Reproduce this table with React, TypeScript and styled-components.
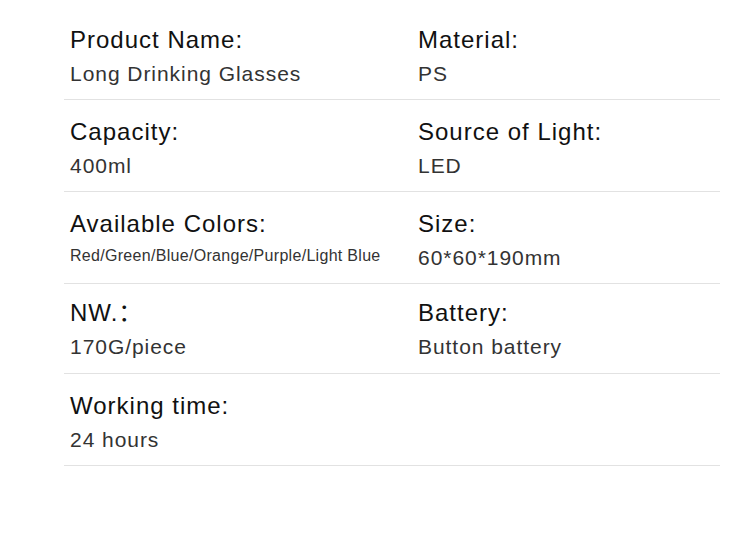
import {createGlobalStyle, styled} from "styled-components"

type Spec = {label: string, value: string, small?: boolean}

const rows: {cells: Spec[], tight?: boolean}[] = [
  {cells: [{label: "Product Name:", value: "Long Drinking Glasses"}, {label: "Material:", value: "PS"}]},
  {cells: [{label: "Capacity:", value: "400ml"}, {label: "Source of Light:", value: "LED"}]},
  {cells: [{label: "Available Colors:", value: "Red/Green/Blue/Orange/Purple/Light Blue", small: true}, {label: "Size:", value: "60*60*190mm"}]},
  {cells: [{label: "NW.：", value: "170G/piece"}, {label: "Battery:", value: "Button battery"}], tight: true},
  {cells: [{label: "Working time:", value: "24 hours"}]},
]

const App = () => {
  return (
    <Page>
      <GlobalStyle />
      <Table>
        {rows.map(({cells, tight}, i) => (
          <Row key={i} $tight={tight}>
            {cells.map(({label, value, small}) => (
              <Cell key={label}>
                <Label>{label}</Label>
                <Value $small={small}>{value}</Value>
              </Cell>
            ))}
          </Row>
        ))}
      </Table>
    </Page>
  )
}

export default App

const GlobalStyle = createGlobalStyle`
  body {
    margin: 0;
    background: #fff;
    font-family: "Liberation Sans", Arial, "Noto Sans CJK SC", sans-serif;
  }
`

const Page = styled.div`
  width: 750px;
  height: 552px;
  padding: 8px 30px 0 64px;
  box-sizing: border-box;
  background: #fff;
`

const Table = styled.div`
  display: flex;
  flex-direction: column;
`

const Row = styled.div<{$tight?: boolean}>`
  display: grid;
  grid-template-columns: 348px 1fr;
  padding: ${({$tight}) => $tight ? "11px 0 11px" : "14px 0 10px"};
  border-bottom: 1px solid #e2e2e2;
`

const Cell = styled.div`
  display: flex;
  flex-direction: column;
  row-gap: 0;
  padding-left: 6px;
`

const Label = styled.div`
  font-size: 24px;
  line-height: 36px;
  letter-spacing: 1px;
  color: #111;
`

const Value = styled.div<{$small?: boolean}>`
  font-size: ${({$small}) => $small ? "16px" : "21px"};
  line-height: ${({$small}) => $small ? "28px" : "31px"};
  letter-spacing: ${({$small}) => $small ? "0.3px" : "0.95px"};
  color: #333;
`
